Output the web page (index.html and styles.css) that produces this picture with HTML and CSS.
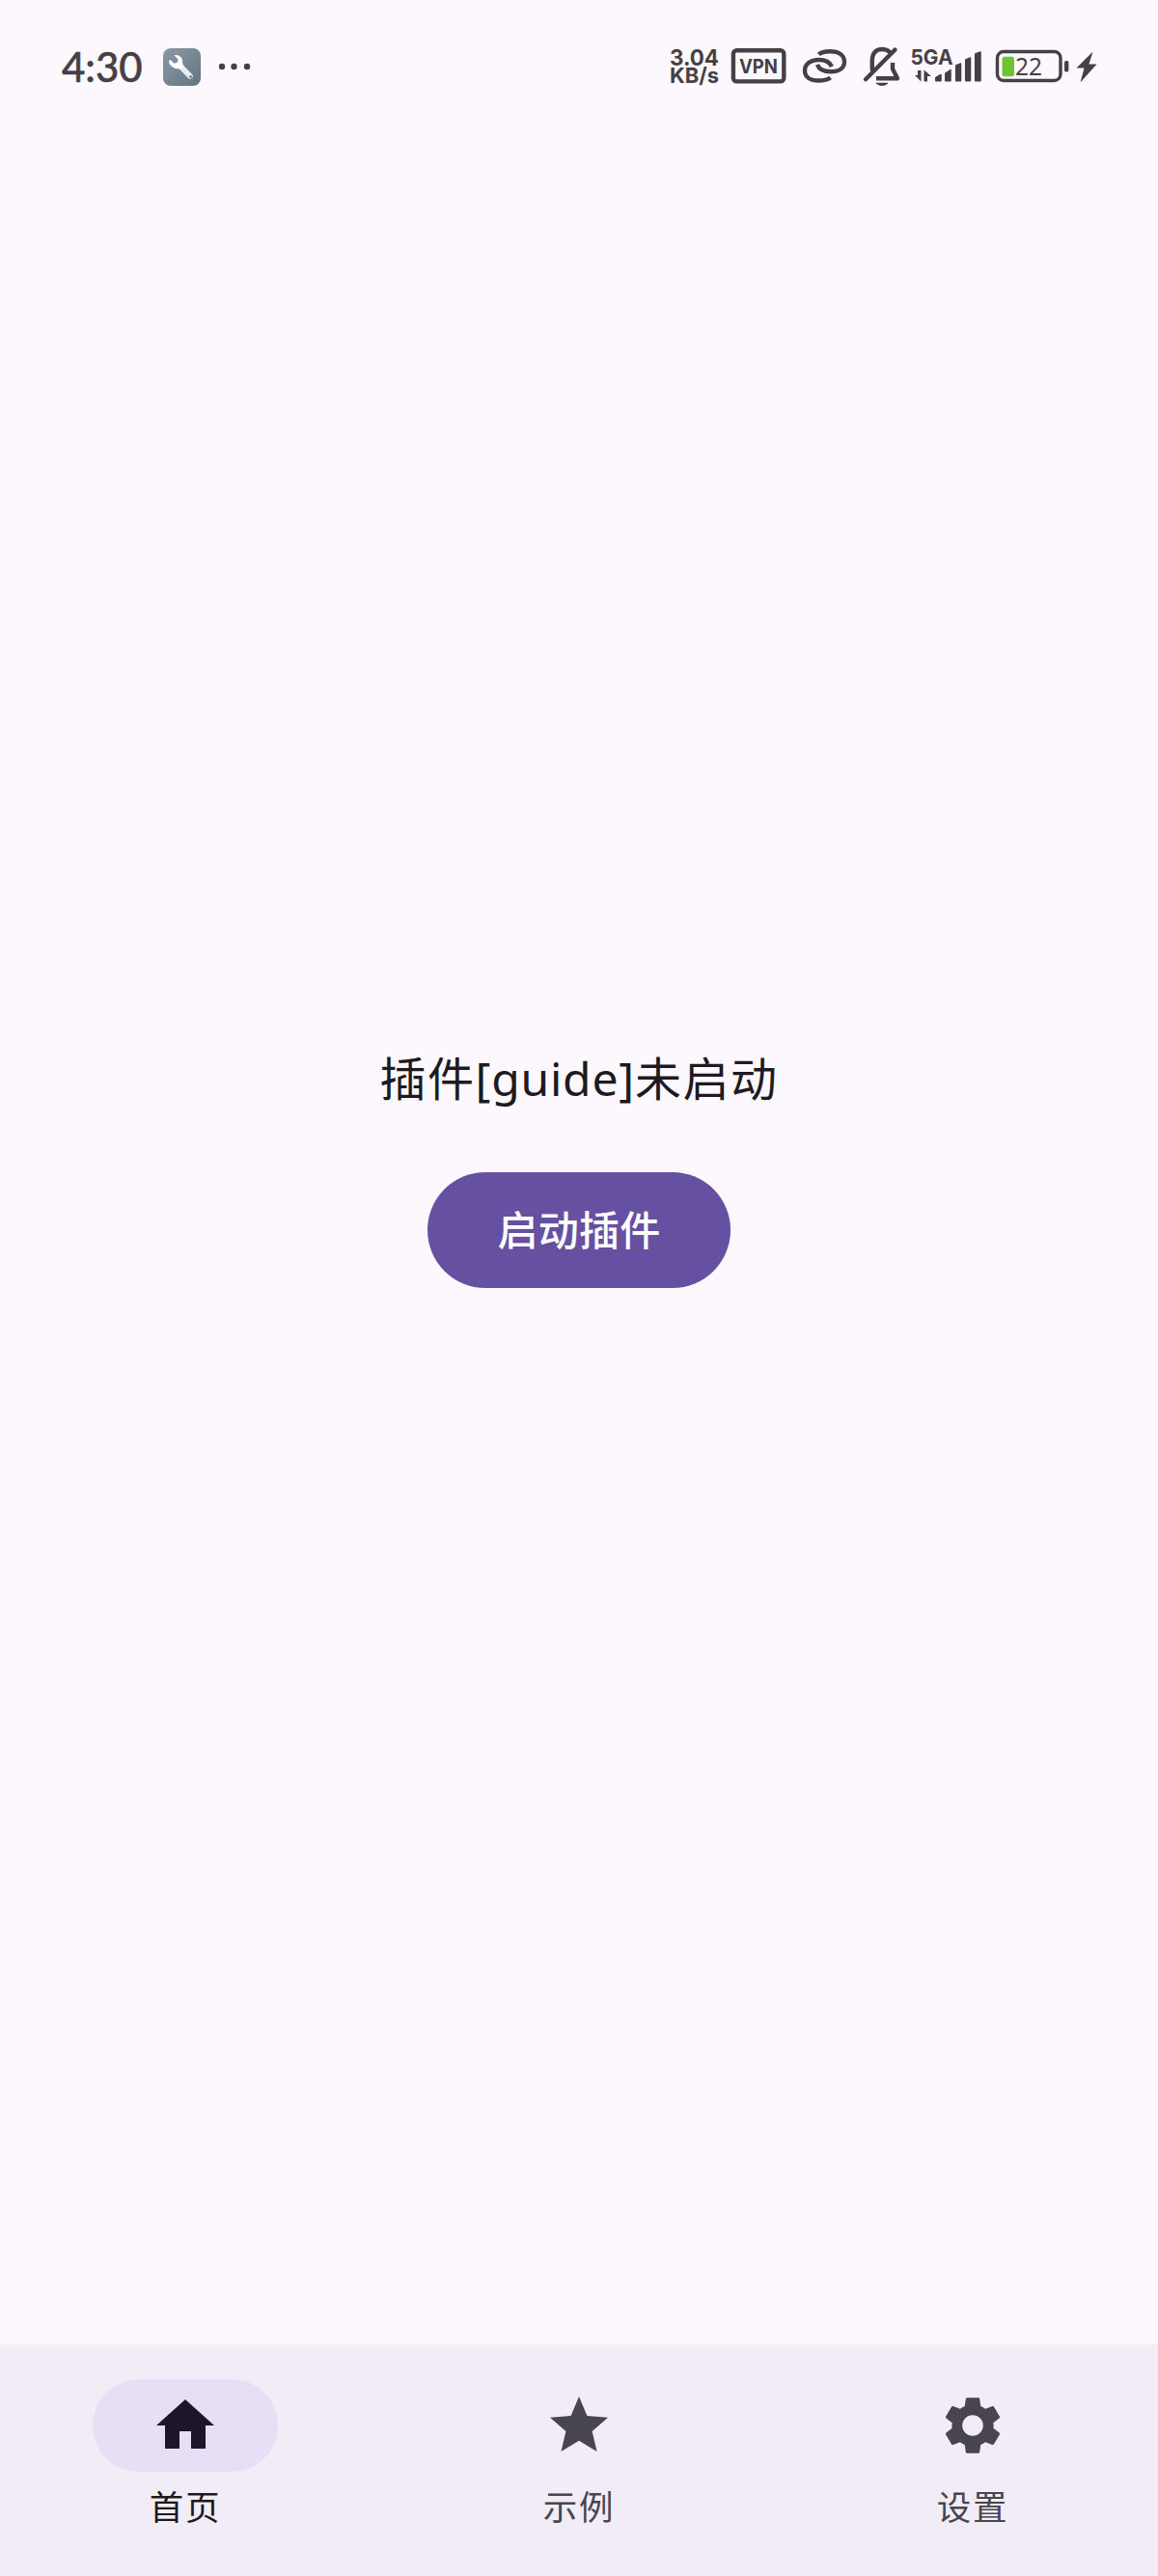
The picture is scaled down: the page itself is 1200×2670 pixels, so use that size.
FILE: index.html
```html
<!DOCTYPE html>
<html lang="zh-CN">
<head>
<meta charset="utf-8">
<title>插件</title>
<link rel="stylesheet" href="styles.css">
</head>
<body>
<div class="screen">
  <header class="status-bar">
    <div class="status-left">
      <span class="clock">4:30</span>
      <svg class="tool-icon" width="39" height="39" viewBox="0 0 39 39">
        <defs><linearGradient id="tool" x1="0" y1="0" x2="1" y2="1"><stop offset="0" stop-color="#899aa6"/><stop offset="1" stop-color="#65737f"/></linearGradient></defs>
        <rect width="39" height="39" rx="8" fill="url(#tool)"/>
        <path d="M17 17.500 28 29" stroke="#e2edf5" stroke-width="5.600" stroke-linecap="round"/>
        <path d="M11.500 7.200C17 6 21 10.500 20 15L21.500 20 17.500 21.500C12 22 5.500 18 6 13L7.500 12 11.500 15.800 15 14.500 15.500 11.500Z" fill="#fff"/>
        <circle cx="28.500" cy="29.500" r="1.500" fill="#71818d"/>
      </svg>
      <svg class="more-icon" width="34" height="8" viewBox="0 0 34 8"><circle cx="4" cy="4" r="3.200"/><circle cx="16.500" cy="4" r="3.200"/><circle cx="30" cy="4" r="3.200"/></svg>
    </div>
    <div class="status-right">
      <svg width="62" height="50" viewBox="690 45 62 50">
        <text x="694" y="67.500" class="bold" font-size="23.500" textLength="51" lengthAdjust="spacingAndGlyphs">3.04</text>
        <text x="694" y="86" class="bold" font-size="22" textLength="51" lengthAdjust="spacingAndGlyphs">KB/s</text>
      </svg>
      <svg width="74" height="50" viewBox="752 45 74 50">
        <rect x="759.900" y="52.200" width="52.400" height="32.200" rx="3.500" class="line" stroke-width="4.400"/>
        <text x="766" y="75.800" class="bold" font-size="20.500" textLength="40" lengthAdjust="spacingAndGlyphs">VPN</text>
      </svg>
      <svg width="60" height="50" viewBox="826 45 60 50">
        <g class="line" stroke-width="4.400">
          <path d="M848.500 56.500C851 53.700 855 53.200 860 53.200C869 53.200 875 57 875 64C875 71 869 74.200 861 74.200C853 74.200 848.500 71.500 847 67"/>
          <path d="M862 69C860 64.500 855.500 62 848.500 62C840 62 834 66.500 834 73.300C834 80 840 83.500 848 83.500C854 83.500 857.500 83 860.500 80.300"/>
        </g>
      </svg>
      <svg width="54" height="50" viewBox="886 45 54 50">
        <g class="line" stroke-width="4.400" stroke-linecap="round" stroke-linejoin="round">
          <path d="M897 82.300 927.500 51.500"/>
          <path d="M903.800 72V63C903.800 55 908 51 914 51C917.500 51 920 52 922 54"/>
          <path d="M925 65V71.500L930 81.200H908" stroke-linecap="butt"/>
        </g>
        <path d="M907.500 85.800H920.500C918.500 90 909.500 90 907.500 85.800Z"/>
      </svg>
      <svg width="84" height="50" viewBox="940 45 84 50">
        <text x="943.500" y="67" class="bold" font-size="22" textLength="44" lengthAdjust="spacingAndGlyphs">5GA</text>
        <path d="M951 73H954.500V84.500L948 78H951ZM957.500 84.500V72.500L965 79H961V84.500Z"/>
        <g stroke="#453f46" stroke-width="1.500" stroke-linejoin="round">
          <path d="M969.800 80.500 975 77.500V83.800H969.800ZM979.800 76 985 72.500V83.800H979.800ZM990.700 68 995.500 66V83.800H990.700ZM1000.700 62 1005.500 60V83.800H1000.700ZM1010.700 56 1016 54V83.800H1010.700Z"/>
        </g>
      </svg>
      <svg width="88" height="50" viewBox="1024 45 88 50">
        <rect x="1033.500" y="53.500" width="65.500" height="30" rx="6.500" class="line" stroke-width="3.400"/>
        <rect x="1038.500" y="58.700" width="12.500" height="20.500" rx="2.500" fill="#6cc531"/>
        <text x="1052" y="78" class="digits" font-size="26" textLength="28" lengthAdjust="spacingAndGlyphs">22</text>
        <rect x="1103" y="63" width="4.400" height="11.500" rx="1.800"/>
      </svg>
      <svg width="28" height="50" viewBox="1112 45 28 50">
        <path d="M1132.500 53.500 1115.500 70.500H1123.500L1119.500 85.500 1136.500 66.500H1128.500Z"/>
      </svg>
    </div>
  </header>
  <main class="content">
    <p class="message">插件<span class="latin">[guide]</span>未启动</p>
    <button class="start-button" type="button">启动插件</button>
  </main>
  <nav class="nav-bar">
    <a class="nav-item active">
      <span class="indicator"><svg width="72" height="72" viewBox="0 0 24 24"><path d="M10 20v-6h4v6h5v-8h3L12 3 2 12h3v8z"/></svg></span>
      <span class="label">首页</span>
    </a>
    <a class="nav-item">
      <span class="indicator"><svg width="72" height="72" viewBox="0 0 24 24"><path d="M12 17.270 18.180 21l-1.640-7.030L22 9.240l-7.190-.610L12 2 9.190 8.630 2 9.240l5.460 4.730L5.820 21z"/></svg></span>
      <span class="label">示例</span>
    </a>
    <a class="nav-item">
      <span class="indicator"><svg width="72" height="72" viewBox="0 0 24 24"><path d="M19.140 12.940c.04-.3.06-.61.06-.94 0-.32-.02-.64-.07-.94l2.030-1.580c.18-.14.23-.41.12-.61l-1.920-3.320c-.12-.22-.37-.29-.59-.22l-2.390.96c-.5-.38-1.030-.7-1.620-.94l-.36-2.540c-.04-.24-.24-.41-.48-.41h-3.840c-.24 0-.43.17-.47.41l-.36 2.540c-.59.24-1.130.57-1.620.94l-2.390-.96c-.22-.08-.47 0-.59.22L2.740 8.870c-.12.21-.08.47.12.61l2.030 1.580c-.05.3-.09.63-.09.94s.02.64.07.94l-2.030 1.580c-.18.14-.23.41-.12.61l1.920 3.320c.12.22.37.29.59.22l2.390-.96c.5.38 1.030.7 1.620.94l.36 2.540c.05.24.24.41.48.41h3.840c.24 0 .44-.17.47-.41l.36-2.540c.59-.24 1.130-.56 1.620-.94l2.390.96c.22.08.47 0 .59-.22l1.920-3.320c.12-.22.07-.47-.12-.61zM12 15.600c-1.980 0-3.600-1.620-3.600-3.600s1.620-3.600 3.600-3.600 3.600 1.620 3.600 3.600-1.620 3.600-3.600 3.600z"/></svg></span>
      <span class="label">设置</span>
    </a>
  </nav>
</div>
</body>
</html>
```
FILE: styles.css
```css
* { box-sizing: border-box; }
body { margin: 0; font-family: "Noto Sans CJK SC", sans-serif; }
svg { display: block; flex: none; }
.screen { width: 1200px; height: 2670px; display: flex; flex-direction: column; background: #fcf8fe; }

.status-bar { height: 140px; padding: 45px 60px 0 64px; display: flex; justify-content: space-between; align-items: flex-start; color: #453f46; fill: #453f46; }
.status-left { display: flex; align-items: center; height: 48px; }
.clock { width: 105px; font: 500 42px/48px Lato, sans-serif; white-space: nowrap; -webkit-text-stroke: .5px #453f46; }
.more-icon { margin-left: 18px; }
.status-right { display: flex; }
.line { fill: none; stroke: #453f46; }
.bold { font-family: Inter, sans-serif; font-weight: 700; }
.digits { font-family: "Noto Sans", sans-serif; }

.content { flex: 1; display: flex; flex-direction: column; align-items: center; padding-top: 939px; }
.message { margin: 0; height: 72px; line-height: 72px; font-size: 48px; letter-spacing: 1.500px; color: #1d1b20; white-space: nowrap; }
.latin { font-family: "Noto Sans", sans-serif; letter-spacing: .8px; }
.start-button { margin-top: 64px; width: 314px; height: 120px; padding: 0 0 4px; border: 0; border-radius: 60px; background: #6650a2; color: #fff; font: 500 42px/60px "Noto Sans CJK SC", sans-serif; letter-spacing: .3px; }

.nav-bar { height: 240px; padding-top: 36px; display: grid; grid-template-columns: repeat(3, 384px); gap: 24px; background: #f2ecf6; }
.nav-item { display: flex; flex-direction: column; align-items: center; color: #49454f; fill: #49454f; }
.indicator { width: 192px; height: 96px; border-radius: 48px; display: flex; align-items: center; justify-content: center; }
.label { margin-top: 11px; font-size: 35.500px; line-height: 48px; letter-spacing: 1.700px; }
.active { color: #1d1b20; fill: #1d162b; }
.active .indicator { background: #e6dff6; }
```
